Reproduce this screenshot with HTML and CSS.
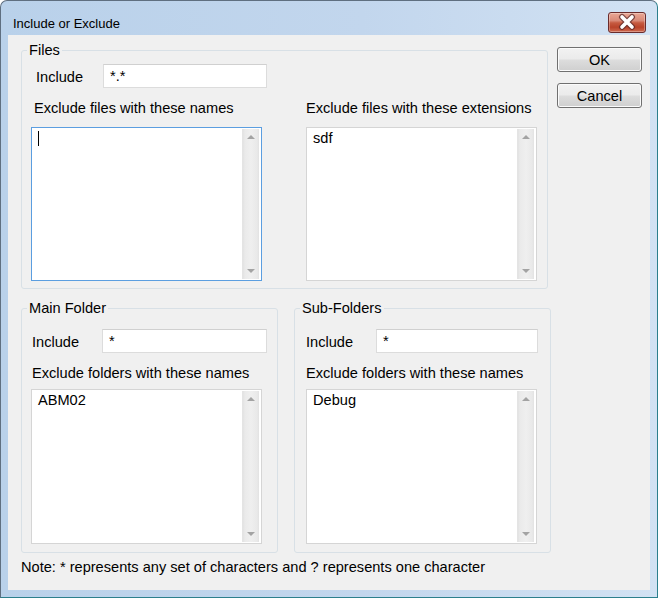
FILE: index.html
```html
<!DOCTYPE html>
<html>
<head>
<meta charset="utf-8">
<title>Include or Exclude</title>
<link rel="stylesheet" href="styles.css">
</head>
<body>
<div class="window">
  <div class="titlebar">
    <span class="title">Include or Exclude</span>
    <div class="close">
      <svg width="36" height="19" viewBox="0 0 36 19">
        <path d="M13 4 L23 14 M23 4 L13 14" stroke="#5a2a2a" stroke-opacity="0.75" stroke-width="6" stroke-linecap="round" fill="none"/>
        <path d="M13 4 L23 14 M23 4 L13 14" stroke="#ffffff" stroke-width="3.6" stroke-linecap="round" fill="none"/>
      </svg>
    </div>
  </div>
  <div class="client">
    <div class="top-row">
      <fieldset class="group files">
        <legend>Files</legend>
        <div class="inc-row files-inc">
          <span class="inc-label">Include</span>
          <div class="input files-input">*.*</div>
        </div>
        <div class="cols">
          <div class="col col1">
            <div class="lbl">Exclude files with these names</div>
            <div class="listbox files-lb focused">
              <div class="lb-text"><span class="caret"></span></div>
              <div class="vscroll"><span class="arr up"></span><span class="arr down"></span></div>
            </div>
          </div>
          <div class="col col2">
            <div class="lbl">Exclude files with these extensions</div>
            <div class="listbox files-lb">
              <div class="lb-text">sdf</div>
              <div class="vscroll"><span class="arr up"></span><span class="arr down"></span></div>
            </div>
          </div>
        </div>
      </fieldset>
      <div class="buttons">
        <button class="btn">OK</button>
        <button class="btn">Cancel</button>
      </div>
    </div>
    <div class="bottom-row">
      <fieldset class="group folder main">
        <legend>Main Folder</legend>
        <div class="inc-row">
          <span class="inc-label">Include</span>
          <div class="input">*</div>
        </div>
        <div class="lbl">Exclude folders with these names</div>
        <div class="listbox folder-lb">
          <div class="lb-text">ABM02</div>
          <div class="vscroll"><span class="arr up"></span><span class="arr down"></span></div>
        </div>
      </fieldset>
      <fieldset class="group folder sub">
        <legend>Sub-Folders</legend>
        <div class="inc-row">
          <span class="inc-label">Include</span>
          <div class="input">*</div>
        </div>
        <div class="lbl">Exclude folders with these names</div>
        <div class="listbox folder-lb">
          <div class="lb-text">Debug</div>
          <div class="vscroll"><span class="arr up"></span><span class="arr down"></span></div>
        </div>
      </fieldset>
    </div>
    <div class="note">Note: * represents any set of characters and ? represents one character</div>
  </div>
</div>
</body>
</html>
```

FILE: styles.css
```css
html, body {
  margin: 0;
  padding: 0;
  background: #ffffff;
}

.window {
  width: 658px;
  height: 598px;
  box-sizing: border-box;
  border: 1px solid #5f6f80;
  border-right-color: #2c7f8c;
  border-bottom-color: #2c7f8c;
  border-radius: 7px 7px 0 0;
  background: linear-gradient(to right, #b9d1ea 0%, #c2d6ed 55%, #d2e2f3 100%);
  padding: 0 7px 7px 7px;
  display: flex;
  flex-direction: column;
  font-family: "Liberation Sans", Arial, sans-serif;
  color: #000;
}

.titlebar {
  height: 34px;
  flex: none;
  display: flex;
  align-items: flex-start;
  padding-left: 5px;
}

.title {
  font-size: 13px;
  line-height: 14px;
  margin-top: 16px;
}

.close {
  margin-left: auto;
  margin-right: 4px;
  margin-top: 11px;
  width: 38px;
  height: 21px;
  box-sizing: border-box;
  border: 1px solid #6a2c2c;
  border-radius: 3px;
  background: linear-gradient(to bottom, #e9a795 0%, #d98a78 40%, #c65a40 52%, #b9432a 75%, #cf6a50 100%);
  box-shadow: inset 0 0 0 1px rgba(255, 255, 255, 0.3);
}

.close svg {
  display: block;
}

.client {
  flex: 1;
  background: #f0f0f0;
  padding: 6px 0 0 13px;
  font-size: 14.6px;
}

.top-row {
  display: flex;
  align-items: flex-start;
}

.group {
  margin: 0;
  padding: 0;
  min-width: 0;
  border: 1px solid #d8e0e6;
  border-radius: 3px;
  box-sizing: border-box;
}

.group legend {
  font-size: 14.6px;
  line-height: 18px;
  padding: 0 2px;
  margin-left: 5px;
}

.files {
  width: 527px;
  padding-bottom: 7px;
}

.inc-row {
  display: flex;
  align-items: center;
}

.inc-label {
  line-height: 18px;
  padding-top: 1px;
}

.input {
  height: 24px;
  box-sizing: border-box;
  border: 1px solid #dcdcdc;
  border-top-color: #d0d0d0;
  background: #fff;
  line-height: 22px;
  padding-left: 6px;
}

.files-inc {
  margin-top: 5px;
  padding-left: 14px;
}

.files-inc .inc-label {
  width: 67px;
}

.files-input {
  width: 164px;
}

.cols {
  display: flex;
  margin-top: 11px;
}

.col {
  width: 231px;
}

.col1 {
  margin-left: 9px;
}

.col1 .lbl {
  padding-left: 3px;
}

.col2 {
  margin-left: 44px;
}

.lbl {
  line-height: 18px;
  white-space: nowrap;
}

.files .lbl {
  margin-bottom: 10px;
}

.listbox {
  box-sizing: border-box;
  border: 1px solid #d5d5d5;
  background: #fff;
  display: flex;
}

.listbox.focused {
  border-color: #5b9ee0;
}

.files-lb {
  height: 154px;
}

.lb-text {
  flex: 1;
  padding: 1px 6px;
  line-height: 18px;
}

.caret {
  display: inline-block;
  width: 1px;
  height: 15px;
  background: #000;
  vertical-align: -2px;
  margin-top: 2px;
}

.vscroll {
  width: 17px;
  flex: none;
  margin: 1px 2px 1px 0;
  display: flex;
  flex-direction: column;
  justify-content: space-between;
  align-items: center;
  background: linear-gradient(to right, #e2e2e2 0%, #eaeaea 12%, #efefef 50%, #e9e9e9 88%, #e2e2e2 100%);
  border-left: 1px solid #e4e4e4;
  box-sizing: border-box;
  padding: 6px 0 6px 0;
}

.arr {
  width: 0;
  height: 0;
  border-left: 4px solid transparent;
  border-right: 4px solid transparent;
}

.arr.up {
  border-bottom: 4px solid #a3a3a3;
}

.arr.down {
  border-top: 4px solid #a3a3a3;
}

.buttons {
  margin-left: 9px;
  margin-top: 6px;
  display: flex;
  flex-direction: column;
  gap: 11px;
}

.btn {
  width: 85px;
  height: 25px;
  box-sizing: border-box;
  border: 1px solid #707070;
  border-radius: 3px;
  background: linear-gradient(to bottom, #f2f2f2 0%, #ebebeb 48%, #dddddd 52%, #cfcfcf 100%);
  box-shadow: inset 0 0 0 1px #fbfbfb;
  font-family: "Liberation Sans", Arial, sans-serif;
  font-size: 14.6px;
  color: #000;
  padding: 0;
  line-height: 22px;
}

.bottom-row {
  display: flex;
  gap: 16px;
  margin-top: 10px;
}

.folder {
  width: 257px;
  padding-bottom: 8px;
}

.folder .inc-row {
  margin-top: 12px;
}

.folder .inc-label {
  width: 70px;
}

.folder .lbl {
  margin-top: 11px;
  margin-bottom: 7px;
}

.folder-lb {
  height: 155px;
  width: 231px;
}

.main .inc-row,
.main .lbl {
  padding-left: 10px;
}

.main .input {
  width: 165px;
}

.main .folder-lb {
  margin-left: 9px;
}

.sub .inc-row,
.sub .lbl {
  padding-left: 11px;
}

.sub .input {
  width: 162px;
}

.sub .folder-lb {
  margin-left: 11px;
}

.note {
  margin-top: 5px;
  line-height: 18px;
}
```
